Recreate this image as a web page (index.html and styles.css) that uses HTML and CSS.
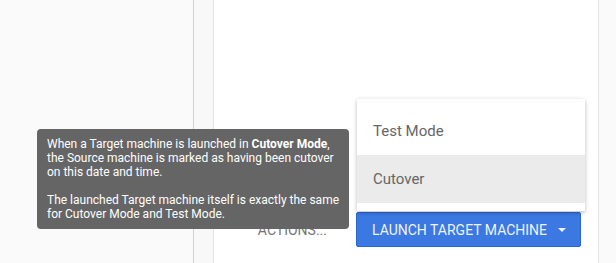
FILE: index.html
```html
<!DOCTYPE html>
<html lang="en">
<head>
    <meta charset="UTF-8">
    <title>Launch Target Machine</title>
    <link rel="stylesheet" href="styles.css">
</head>
<body>
    <div class="page">
        <div class="sidebar"></div>
        <div class="rail"></div>
        <div class="main">
            <div class="actions-row">
                <button class="text-btn">Actions...</button>
                <div class="launch-wrap">
                    <ul class="menu">
                        <li class="menu-item">Test Mode</li>
                        <li class="menu-item active">Cutover</li>
                    </ul>
                    <button class="launch-btn">
                        Launch Target Machine
                        <span class="caret"></span>
                    </button>
                </div>
            </div>
        </div>
        <div class="gutter"></div>

        <div class="tooltip">
            <p>When a Target machine is launched in <b>Cutover Mode</b>, the Source machine is marked as having been cutover on this date and time.</p>
            <p>The launched Target machine itself is exactly the same for Cutover Mode and Test Mode.</p>
        </div>
    </div>
</body>
</html>
```

FILE: styles.css
```css
body {
    margin: 0;
    font-family: Roboto, "Liberation Sans", Arial, sans-serif;
    background-color: #fafafa;
}

.page {
    position: relative;
    display: flex;
    height: 263px;
    width: 616px;
    overflow: hidden;
}

.sidebar {
    width: 193px;
    background-color: #fafafa;
    border-right: 1px solid #d2d2d2;
}

.rail {
    width: 19px;
    background-color: #f8f8f8;
    border-right: 1px solid #e4e4e4;
}

.main {
    width: 385px;
    background-color: #fff;
    border-right: 1px solid #e4e4e4;
    display: flex;
    flex-direction: column;
    justify-content: flex-end;
    padding-bottom: 16px;
    box-sizing: border-box;
}

.gutter {
    flex: 1;
    background-color: #fafafa;
}

.actions-row {
    display: flex;
    align-items: center;
    justify-content: flex-end;
    padding-right: 17px;
}

.text-btn {
    background: none;
    border: none;
    font-family: inherit;
    font-size: 14px;
    text-transform: uppercase;
    color: #777;
    padding: 0;
    margin-right: 29px;
}

.launch-wrap {
    position: relative;
}

.launch-btn {
    display: flex;
    align-items: center;
    width: 225px;
    height: 35px;
    padding: 0 0 0 15px;
    background-color: #3b78e1;
    border: 1px solid #2c66cf;
    border-radius: 2px;
    color: #eef3fd;
    font-family: inherit;
    font-size: 14px;
    text-transform: uppercase;
    box-sizing: border-box;
}

.caret {
    margin-left: 11px;
    border-left: 4px solid transparent;
    border-right: 4px solid transparent;
    border-top: 4px solid #eef3fd;
}

.menu {
    position: absolute;
    left: 1px;
    bottom: calc(100% + 1px);
    width: 228px;
    margin: 0;
    padding: 8px 0;
    list-style: none;
    background-color: #fff;
    box-shadow: 0 1px 5px rgba(0,0,0,0.18), 0 2px 3px rgba(0,0,0,0.1);
}

.menu-item {
    height: 48px;
    line-height: 48px;
    padding-left: 16px;
    font-size: 15px;
    color: #666;
}

.menu-item.active {
    background-color: #ebebeb;
}

.tooltip {
    position: absolute;
    left: 37px;
    top: 129px;
    width: 312px;
    height: 100px;
    box-sizing: border-box;
    padding: 8px 2px 8px 10px;
    background-color: #656565;
    border-radius: 4px;
    color: #fff;
    font-size: 12px;
    line-height: 14px;
}

.tooltip p {
    margin: 0 0 14px;
}

.tooltip p:last-child {
    margin-bottom: 0;
}
```
